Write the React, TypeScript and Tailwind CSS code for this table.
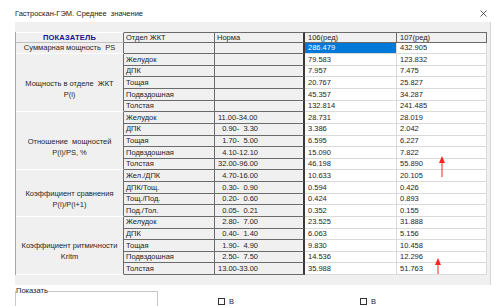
import * as React from "react";

type Row = { part: string; norm: string; a: string; b: string };
type Group = { label: string[]; rows: Row[] };

const F = "\u2007";

const groups: Group[] = [
  {
    label: ["Суммарная мощность  PS"],
    rows: [{ part: "", norm: "", a: "286.479", b: "432.905" }],
  },
  {
    label: ["Мощность в отделе  ЖКТ", "P(i)"],
    rows: [
      { part: "Желудок", norm: "", a: "79.583", b: "123.832" },
      { part: "ДПК", norm: "", a: "7.957", b: "7.475" },
      { part: "Тощая", norm: "", a: "20.767", b: "25.827" },
      { part: "Подвздошная", norm: "", a: "45.357", b: "34.287" },
      { part: "Толстая", norm: "", a: "132.814", b: "241.485" },
    ],
  },
  {
    label: ["Отношение  мощностей", "P(i)/PS, %"],
    rows: [
      { part: "Желудок", norm: "11.00-34.00", a: "28.731", b: "28.019" },
      { part: "ДПК", norm: `${F}0.90-${F}3.30`, a: "3.386", b: "2.042" },
      { part: "Тощая", norm: `${F}1.70-${F}5.00`, a: "6.595", b: "6.227" },
      { part: "Подвздошная", norm: `${F}4.10-12.10`, a: "15.090", b: "7.822" },
      { part: "Толстая", norm: "32.00-96.00", a: "46.198", b: "55.890" },
    ],
  },
  {
    label: ["Коэффициент сравнения", "P(i)/P(i+1)"],
    rows: [
      { part: "Жел./ДПК", norm: `${F}4.70-16.00`, a: "10.633", b: "20.105" },
      { part: "ДПК/Тощ.", norm: `${F}0.30-${F}0.90`, a: "0.594", b: "0.426" },
      { part: "Тощ./Под.", norm: `${F}0.20-${F}0.60`, a: "0.424", b: "0.893" },
      { part: "Под./Тол.", norm: `${F}0.05-${F}0.21`, a: "0.352", b: "0.155" },
    ],
  },
  {
    label: ["Коэффициент ритмичности", "Kritm"],
    rows: [
      { part: "Желудок", norm: `${F}2.80-${F}7.00`, a: "23.525", b: "31.888" },
      { part: "ДПК", norm: `${F}0.40-${F}1.40`, a: "6.063", b: "5.156" },
      { part: "Тощая", norm: `${F}1.90-${F}4.90`, a: "9.830", b: "10.458" },
      { part: "Подвздошная", norm: `${F}2.50-${F}7.50`, a: "14.536", b: "12.296" },
      { part: "Толстая", norm: "13.00-33.00", a: "35.988", b: "51.763" },
    ],
  },
];

const spans: Record<number, string> = { 1: "row-span-1", 4: "row-span-4", 5: "row-span-5" };

const fixedCell =
  "flex items-center overflow-hidden whitespace-pre border-b border-r border-[#6b6b6b] bg-[#f0f0f0] pl-[2px] leading-none";
const dataCell =
  "flex items-center overflow-hidden whitespace-pre border-b border-r border-[#dadada] pl-[3px] leading-none";

function Table() {
  return (
    <div className="grid w-[471px] grid-cols-[108px_91px_90px_92px_90px] grid-rows-[10.5px_repeat(20,11.63px)] border-l border-[#a8a8a8]">
      {/* Header */}
      <div className="flex items-center justify-center border-b border-r border-b-[#c0c0c0] border-r-[#6b6b6b] border-t border-t-white bg-[#f0f0f0] font-bold tracking-[0.2px] text-[#12129a]">
        ПОКАЗАТЕЛЬ
      </div>
      <div className={`${fixedCell} border-t`}>Отдел ЖКТ</div>
      <div className={`${fixedCell} border-t !border-r-2 !border-r-[#3a3a3a]`}>Норма</div>
      <div className={`${fixedCell} border-t pl-[3px]`}>106(ред)</div>
      <div className={`${fixedCell} border-t pl-[3px]`}>107(ред)</div>

      {groups.map((g, gi) => (
        <React.Fragment key={gi}>
          {g.rows.map((r, ri) => (
            <React.Fragment key={ri}>
              {ri === 0 && (
                <div
                  className={`${spans[g.rows.length]} flex flex-col items-center justify-center border-b border-r border-b-white border-r-[#6b6b6b] bg-[#f0f0f0] text-center leading-[11px] whitespace-pre text-[#262626] ${
                    g.label.length > 1 ? "pt-[12px]" : ""
                  }`}
                >
                  {g.label.map((l) => (
                    <span key={l}>{l}</span>
                  ))}
                </div>
              )}
              <div className={fixedCell}>{r.part}</div>
              <div className={`${fixedCell} !border-r-2 !border-r-[#3a3a3a] pl-[3px]`}>{r.norm}</div>
              <div
                className={`${dataCell} ${
                  gi === 0 ? "bg-[#0078d7] text-white" : "bg-white"
                }`}
              >
                {r.a}
              </div>
              <div className={`${dataCell} bg-white`}>{r.b}</div>
            </React.Fragment>
          ))}
        </React.Fragment>
      ))}
    </div>
  );
}

export default function App() {
  return (
    <div className="relative h-[306px] w-[500px] overflow-hidden bg-white font-['Liberation_Sans',Arial,sans-serif] text-[7.5px] text-[#1e1e1e]">
      {/* Title */}
      <div className="flex h-[22px] items-start justify-between pl-[15px] pr-[13px] pt-[10px]">
        <span className="whitespace-pre leading-[8px] text-[#1a1a1a]">Гастроскан-ГЭМ. Среднее  значение</span>
        <svg width="7" height="7" viewBox="0 0 7 7">
          <path d="M0.5 0.5 L6.5 6.5 M6.5 0.5 L0.5 6.5" stroke="#333" strokeWidth="0.8" />
        </svg>
      </div>

      {/* Grid panel */}
      <div className="ml-[15px] h-[263px] w-[476px] border-r border-[#d6d6d6] bg-[#f0f0f0] pt-[10px]">
        <Table />
      </div>

      {/* Bottom controls */}
      <div className="flex items-start">
        <fieldset className="ml-[15px] mt-[2px] h-[40px] w-[143px] border border-[#c8c8c8]">
          <legend className="leading-[8px] text-[#1a1a1a]">Показать</legend>
        </fieldset>
        <div className="ml-[60px] mt-[13px] flex w-[142px] items-start gap-[4px]">
          <span className="h-[7px] w-[7px] border border-[#333] bg-white" />
          <span className="leading-[8px]">В</span>
        </div>
        <div className="mt-[13px] flex items-start gap-[4px]">
          <span className="h-[7px] w-[7px] border border-[#333] bg-white" />
          <span className="leading-[8px]">В</span>
        </div>
      </div>

      {/* Red arrows drawn on top */}
      <svg className="pointer-events-none absolute left-0 top-0" width="500" height="306">
        <line x1="442" y1="162" x2="442" y2="177" stroke="#ff2020" strokeWidth="1" />
        <polygon points="442,156 439,163 445,163" fill="#ff2020" />
        <line x1="438" y1="264" x2="438" y2="274" stroke="#ff2020" strokeWidth="1" />
        <polygon points="438,258 435,265 441,265" fill="#ff2020" />
      </svg>
    </div>
  );
}
